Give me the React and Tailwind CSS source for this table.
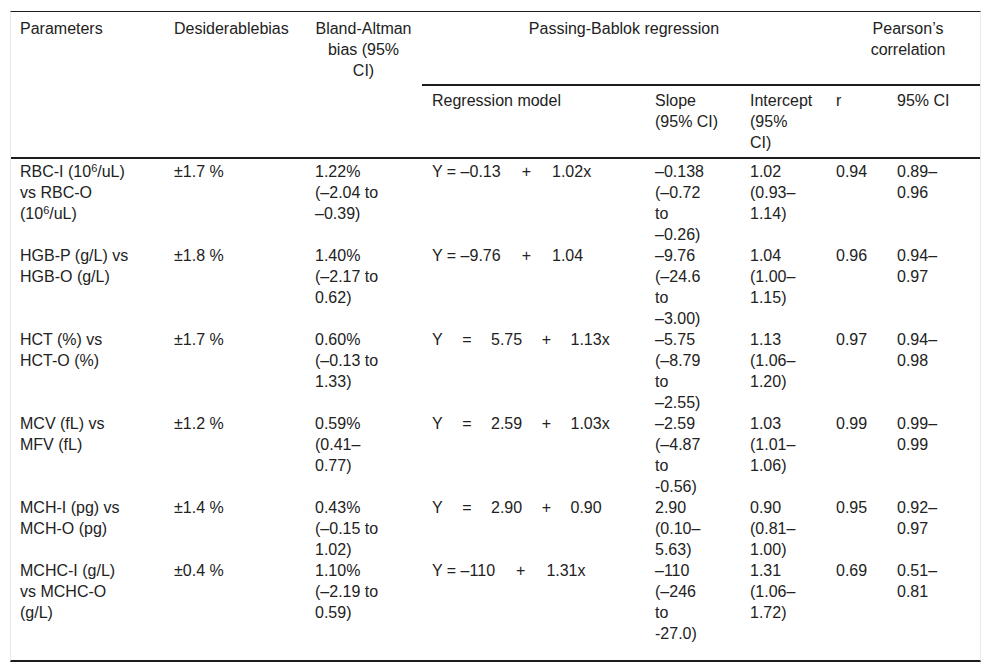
import React from "react";

const cols = "grid grid-cols-[153px_141px_117px_223px_95px_86px_61px_93px]";

const rows = [
  {
    param: [["RBC-I (10", "6", "/uL)"], "vs RBC-O", ["(10", "6", "/uL)"]],
    bias: "±1.7 %",
    ba: ["1.22%", "(–2.04 to", "–0.39)"],
    eq: ["Y = –0.13", "+", "1.02x"],
    slope: ["–0.138", "(–0.72", "to", "–0.26)"],
    icpt: ["1.02", "(0.93–", "1.14)"],
    r: "0.94",
    ci: ["0.89–", "0.96"],
  },
  {
    param: ["HGB-P (g/L) vs", "HGB-O (g/L)"],
    bias: "±1.8 %",
    ba: ["1.40%", "(–2.17 to", "0.62)"],
    eq: ["Y = –9.76", "+", "1.04"],
    slope: ["–9.76", "(–24.6", "to", "–3.00)"],
    icpt: ["1.04", "(1.00–", "1.15)"],
    r: "0.96",
    ci: ["0.94–", "0.97"],
  },
  {
    param: ["HCT (%) vs", "HCT-O (%)"],
    bias: "±1.7 %",
    ba: ["0.60%", "(–0.13 to", "1.33)"],
    eq: ["Y", "=", "5.75", "+", "1.13x"],
    slope: ["–5.75", "(–8.79", "to", "–2.55)"],
    icpt: ["1.13", "(1.06–", "1.20)"],
    r: "0.97",
    ci: ["0.94–", "0.98"],
  },
  {
    param: ["MCV (fL) vs", "MFV (fL)"],
    bias: "±1.2 %",
    ba: ["0.59%", "(0.41–", "0.77)"],
    eq: ["Y", "=", "2.59", "+", "1.03x"],
    slope: ["–2.59", "(–4.87", "to", "-0.56)"],
    icpt: ["1.03", "(1.01–", "1.06)"],
    r: "0.99",
    ci: ["0.99–", "0.99"],
  },
  {
    param: ["MCH-I (pg) vs", "MCH-O (pg)"],
    bias: "±1.4 %",
    ba: ["0.43%", "(–0.15 to", "1.02)"],
    eq: ["Y", "=", "2.90", "+", "0.90"],
    slope: ["2.90", "(0.10–", "5.63)"],
    icpt: ["0.90", "(0.81–", "1.00)"],
    r: "0.95",
    ci: ["0.92–", "0.97"],
  },
  {
    param: ["MCHC-I (g/L)", "vs MCHC-O", "(g/L)"],
    bias: "±0.4 %",
    ba: ["1.10%", "(–2.19 to", "0.59)"],
    eq: ["Y = –110", "+", "1.31x"],
    slope: ["–110", "(–246", "to", "-27.0)"],
    icpt: ["1.31", "(1.06–", "1.72)"],
    r: "0.69",
    ci: ["0.51–", "0.81"],
  },
];

// a line is either plain text or [before, superscript, after]
function Line({ line }) {
  if (Array.isArray(line)) {
    return (
      <>
        {line[0]}
        <sup className="text-[11px]">{line[1]}</sup>
        {line[2]}
      </>
    );
  }
  return <>{line}</>;
}

function Lines({ items }) {
  const list = Array.isArray(items) ? items : [items];
  return list.map((l, i) => (
    <div key={i}>
      <Line line={l} />
    </div>
  ));
}

const Equation = ({ parts }) => {
  const wide = parts.length === 5;
  return (
    <div className={wide ? "flex gap-[19.5px]" : "flex gap-[21px]"}>
      {parts.map((p, i) => (
        <span key={i}>{p}</span>
      ))}
    </div>
  );
};

const App = () => {
  const line = "border-[#1c1c1c]";
  return (
    <div className="min-h-[672px] w-[992px] bg-white pt-[11px] text-[16px] leading-[21px] text-[#222] font-['Liberation_Sans',Arial,sans-serif]">
      <div className={`ml-[10px] w-[971px] border-t border-x border-b-2 ${line} border-x-[#e9e9e9] border-b-[#1c1c1c] whitespace-nowrap`}>
        {/* header */}
        <div className={cols}>
          <div className={`row-span-2 h-[147px] pl-[9px] pt-[6px] border-b-2 ${line}`}>Parameters</div>
          <div className={`row-span-2 h-[147px] pl-[10px] pt-[6px] border-b-2 ${line}`}>Desiderablebias</div>
          <div className={`row-span-2 h-[147px] pl-[10px] pr-[10px] pt-[6px] text-center border-b-2 ${line}`}>
            Bland-Altman<br />bias (95%<br />CI)
          </div>
          <div className={`col-span-3 h-[74px] pt-[6px] text-center border-b-2 ${line}`}>Passing-Bablok regression</div>
          <div className={`col-span-2 h-[74px] pl-[10px] pt-[6px] text-center border-b-2 ${line}`}>
            Pearson’s<br />correlation
          </div>
          <div className={`h-[73px] pl-[10px] pt-[4px] border-b-2 ${line}`}>Regression model</div>
          <div className={`h-[73px] pl-[10px] pt-[4px] border-b-2 ${line}`}>Slope<br />(95% CI)</div>
          <div className={`h-[73px] pl-[10px] pt-[4px] border-b-2 ${line}`}>Intercept<br />(95%<br />CI)</div>
          <div className={`h-[73px] pl-[10px] pt-[4px] border-b-2 ${line}`}>r</div>
          <div className={`h-[73px] pl-[10px] pt-[4px] border-b-2 ${line}`}>95% CI</div>
        </div>

        {/* body */}
        <div className={`${cols} pt-[2px] pb-[16px]`}>
          {rows.map((row, i) => (
            <React.Fragment key={i}>
              <div className="pl-[9px]"><Lines items={row.param} /></div>
              <div className="pl-[10px]"><Lines items={row.bias} /></div>
              <div className="pl-[10px]"><Lines items={row.ba} /></div>
              <div className="pl-[10px]"><Equation parts={row.eq} /></div>
              <div className="pl-[10px]"><Lines items={row.slope} /></div>
              <div className="pl-[10px]"><Lines items={row.icpt} /></div>
              <div className="pl-[10px]"><Lines items={row.r} /></div>
              <div className="pl-[10px]"><Lines items={row.ci} /></div>
            </React.Fragment>
          ))}
        </div>
      </div>
    </div>
  );
};

export default App;
